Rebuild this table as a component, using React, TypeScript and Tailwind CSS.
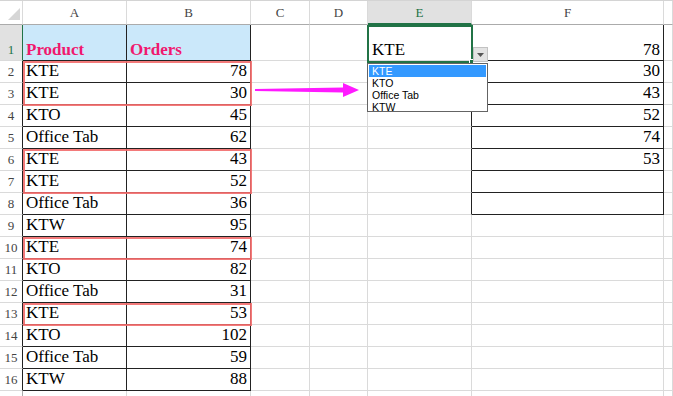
import React from "react";

const rows = [
   { product: "KTE", orders: 78 },
   { product: "KTE", orders: 30 },
   { product: "KTO", orders: 45 },
   { product: "Office Tab", orders: 62 },
   { product: "KTE", orders: 43 },
   { product: "KTE", orders: 52 },
   { product: "Office Tab", orders: 36 },
   { product: "KTW", orders: 95 },
   { product: "KTE", orders: 74 },
   { product: "KTO", orders: 82 },
   { product: "Office Tab", orders: 31 },
   { product: "KTE", orders: 53 },
   { product: "KTO", orders: 102 },
   { product: "Office Tab", orders: 59 },
   { product: "KTW", orders: 88 },
];

const fValues = ["78", "30", "43", "52", "74", "53", "", ""];
const letters = ["", "A", "B", "C", "D", "E", "F", ""];
const options = ["KTE", "KTO", "Office Tab", "KTW"];

// red highlight boxes: [top, height]
const boxes = [
   [60, 45],
   [148, 45],
   [236, 23],
   [302, 23],
];

const grid = "border-r border-b border-r-[#dadada] border-b-[#dadada]";
const dark = "border-r border-b border-r-[#222] border-b-[#222]";

const App = () => {
   const cells: React.ReactNode[] = [];

   letters.forEach((l, i) => {
      if (i === 0) {
         cells.push(
            <div key="h0" className="relative border-r border-b border-r-[#dadada] border-b-[#ababab]">
               <svg className="absolute right-[2px] bottom-[4px]" width="12" height="12" viewBox="0 0 12 12">
                  <polygon points="12,0 12,12 0,12" fill="#d6d6d6" />
               </svg>
            </div>
         );
         return;
      }
      const sel = l === "E";
      cells.push(
         <div
            key={"h" + i}
            className={
               "flex items-center justify-center text-[13px] leading-none border-r border-r-[#dadada] " +
               (sel
                  ? "bg-[#e1e1e1] text-[#217346] border-b-2 border-b-[#217346]"
                  : "text-[#444] border-b border-b-[#ababab]")
            }
         >
            {l}
         </div>
      );
   });

   for (let r = 1; r <= 17; r++) {
      const inTable = r <= 16;
      const row = rows[r - 2];
      for (let c = 0; c < 8; c++) {
         const key = r + "-" + c;
         if (c === 0) {
            cells.push(
               <div
                  key={key}
                  className={
                     "flex items-end justify-center pb-[4px] text-[13px] leading-none border-r border-b border-b-[#dadada] " +
                     (r === 1
                        ? "bg-[#e1e1e1] text-[#217346] border-r-[#217346]"
                        : inTable
                        ? "text-[#444] border-r-[#222]"
                        : "text-[#444] border-r-[#ababab]")
                  }
               >
                  {inTable ? r : ""}
               </div>
            );
         } else if (c === 1) {
            if (r === 1) {
               cells.push(
                  <div key={key} className={"flex items-end pl-[3px] pb-[2px] bg-[#cbe8fa] " + dark}>
                     <span className="text-[17px] leading-none font-bold text-[#f0186e]">Product</span>
                  </div>
               );
            } else {
               cells.push(
                  <div key={key} className={"flex items-end pl-[3px] pb-[3px] " + (inTable ? dark : grid)}>
                     <span className="text-[17px] leading-none text-black">{row?.product}</span>
                  </div>
               );
            }
         } else if (c === 2) {
            if (r === 1) {
               cells.push(
                  <div key={key} className={"flex items-end pl-[3px] pb-[2px] bg-[#cbe8fa] " + dark}>
                     <span className="text-[17px] leading-none font-bold text-[#f0186e]">Orders</span>
                  </div>
               );
            } else {
               cells.push(
                  <div key={key} className={"flex items-end justify-end pr-[3px] pb-[3px] " + (inTable ? dark : grid)}>
                     <span className="text-[17px] leading-none text-black">{row?.orders}</span>
                  </div>
               );
            }
         } else if (c === 5) {
            if (r === 1) {
               cells.push(
                  <div key={key} className={"flex items-end pl-[4px] pb-[2px] " + grid}>
                     <span className="text-[17px] leading-none text-black">KTE</span>
                  </div>
               );
            } else {
               cells.push(
                  <div
                     key={key}
                     className={
                        "border-r border-b border-b-[#dadada] " + (r <= 8 ? "border-r-[#222]" : "border-r-[#dadada]")
                     }
                  />
               );
            }
         } else if (c === 6) {
            const v = fValues[r - 1];
            if (r <= 8) {
               cells.push(
                  <div
                     key={key}
                     className={"flex items-end justify-end pr-[3px] " + (r === 1 ? "pb-[2px] " : "pb-[3px] ") + dark}
                  >
                     <span className="text-[17px] leading-none text-black">{v}</span>
                  </div>
               );
            } else {
               cells.push(<div key={key} className={grid} />);
            }
         } else {
            cells.push(<div key={key} className={grid} />);
         }
      }
   }

   return (
      <div className="relative w-[673px] h-[396px] overflow-hidden bg-white font-['Liberation_Serif',serif] border-t border-t-[#d4d4d4]">
         <div className="grid grid-cols-[23px_104px_124px_59px_58px_104px_192px_9px] grid-rows-[24px_36px_repeat(16,22px)]">
            {cells}
         </div>

         {boxes.map(([top, h], i) => (
            <div
               key={i}
               className="absolute left-[23px] w-[229px] border-2 border-[#f26b6b]/90"
               style={{ top, height: h }}
            />
         ))}

         <svg className="absolute left-[253px] top-[79px]" width="110" height="20" viewBox="0 0 110 20">
            <polygon points="2,9 90,7.5 90,3 106,10 90,17 90,12.5 2,11" fill="#ff1aff" />
         </svg>

         {/* selected cell E1 */}
         <div className="absolute left-[367px] top-[24px] w-[106px] h-[38px] border-2 border-[#217346]" />
         <div className="absolute left-[469px] top-[58px] w-[5px] h-[5px] bg-[#217346] border border-white" />

         {/* dropdown button */}
         <div className="absolute left-[473px] top-[46px] w-[15px] h-[15px] bg-[#e3e3e3] border border-[#c2c2c2] flex items-center justify-center">
            <svg width="7" height="4" viewBox="0 0 7 4">
               <polygon points="0,0 7,0 3.5,4" fill="#555" />
            </svg>
         </div>

         {/* dropdown list */}
         <div className="absolute left-[367px] top-[62px] w-[121px] h-[49px] bg-white border border-[#646464] pt-[1px] px-[1px] font-['Liberation_Sans',sans-serif]">
            {options.map((o, i) => (
               <div
                  key={o}
                  className={
                     "h-[12px] pl-[3px] flex items-center text-[10.5px] leading-none " +
                     (i === 0 ? "bg-[#3399ff] text-white" : "text-black")
                  }
               >
                  {o}
               </div>
            ))}
         </div>
      </div>
   );
};

export default App;
